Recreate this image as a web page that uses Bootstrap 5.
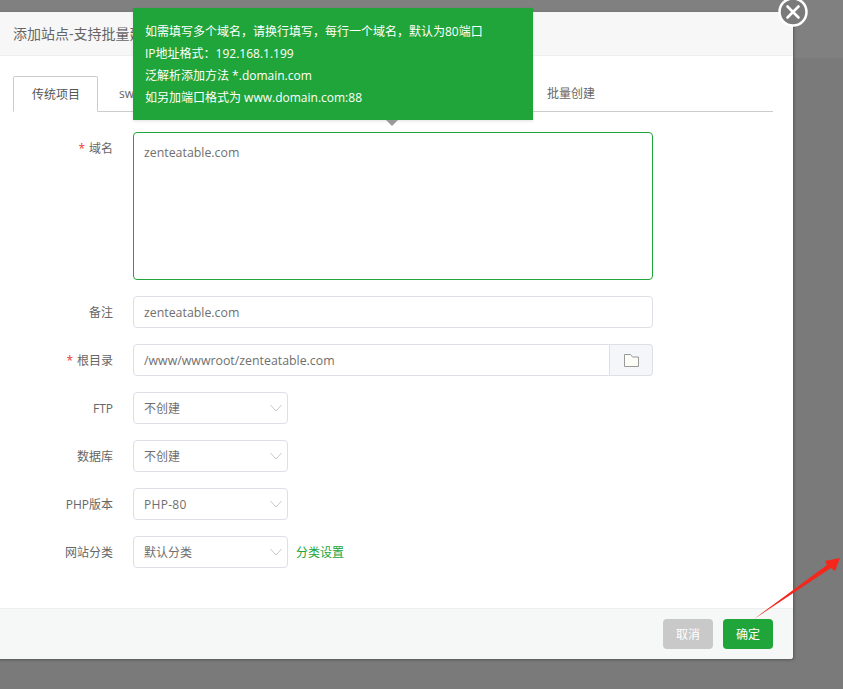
<!DOCTYPE html>
<html lang="zh">
<head>
<meta charset="utf-8">
<title>添加站点</title>
<link href="https://cdn.jsdelivr.net/npm/bootstrap@5.3.0/dist/css/bootstrap.min.css" rel="stylesheet">
<style>
html,body{height:100%;}
body{margin:0;background:#7a7a7a;font-family:"Open Sans","Noto Sans CJK SC",sans-serif;font-size:12px;color:#666;overflow:hidden;position:relative;width:843px;height:689px;}
.top-strip{position:absolute;left:0;top:0;width:843px;height:58px;background:#808080;}
.dialog-box{position:absolute;left:-20px;top:12px;width:813px;height:647px;background:#fff;border-radius:0 0 3px 0;box-shadow:1px 1px 3px rgba(0,0,0,.3);display:flex;flex-direction:column;}
.dialog-head{height:44px;background:#f7f7f7;border-bottom:1px solid #eee;padding:0 0 0 33px;line-height:43px;font-size:14px;color:#666;white-space:nowrap;overflow:hidden;flex:none;}
.dialog-body{flex:1;padding:20px 20px 0 33px;min-height:0;}
.tab-strip{height:36px;width:760px;border-bottom:1px solid #ccc;flex-wrap:nowrap;}
.tab-strip .tab-link{display:block;height:36px;line-height:36px;font-size:12px;color:#666;padding:0;text-align:center;text-decoration:none;}
.tab-on{width:85px;padding-left:1px!important;border:1px solid #ccc;border-bottom-color:#fff;background:#fff;border-radius:2px 2px 0 0;color:#555!important;}
.tab-mid{width:431px;text-align:left!important;padding-left:21px!important;white-space:nowrap;overflow:hidden;}
.tab-last{width:100px;padding-left:18px!important;text-align:left!important;}
.form-area{padding-top:20px;}
.field-row{display:flex;margin-bottom:16px;}
.field-label{width:100px;height:32px;flex:none;text-align:right;line-height:34px;font-size:12px;color:#666;margin:0;}
.req{color:#e33;margin-right:4px;}
.field-main{margin-left:20px;display:flex;align-items:center;}
.text-in{width:520px;height:32px;border:1px solid #dcdfe6;border-radius:4px;padding:0 10px;font-size:12.35px;color:#6f6f6f;line-height:31px;background:#fff;}
.text-area{height:148px;border-color:#20a53a;padding-top:10px;line-height:20px;border-radius:4px;}
.path-in{width:477px;border-radius:4px 0 0 4px;}
.path-btn{width:43px;height:32px;background:#f4f6f9;border:1px solid #dcdfe6;border-left:0;border-radius:0 4px 4px 0;display:flex;align-items:center;justify-content:center;}
.pick{width:155px;height:32px;border:1px solid #dcdfe6;border-radius:4px;padding:1px 5px 0 10px;font-size:12px;line-height:30px;color:#6f6f6f;display:flex;justify-content:space-between;align-items:center;}
.pick svg{margin-top:-1px;}
.wide-txt{letter-spacing:.3px;}
.cat-link{color:#20a53a;margin-left:8px;padding-top:2px;font-size:12px;text-decoration:none;}
.dialog-foot{height:51px;background:#f6f8f8;border-top:1px solid #eee;display:flex;justify-content:flex-end;align-items:center;gap:10px;padding:0 20px 0 0;flex:none;border-radius:0 0 3px 0;}
.foot-btn{width:50px;height:30px;padding:1px 0 0;border:0;border-radius:4px;font-size:12px;color:#fff;line-height:30px;}
.foot-cancel{background:#c9c9c9;}
.foot-ok{background:#20a53a;}
.tip-box{position:absolute;left:133px;top:8px;width:400px;height:112px;background:#20a53a;color:#fff;font-size:12px;line-height:22px;padding:13px 12px 0;box-shadow:0 1px 3px rgba(0,0,0,.12);}
.tip-box p{margin:0;white-space:nowrap;}
.tip-arrow{position:absolute;left:386px;top:120px;width:0;height:0;border-left:6px solid transparent;border-right:6px solid transparent;border-top:6px solid #999;}
.close-x{position:absolute;left:778px;top:-3px;width:30px;height:30px;}
.mark-arrow{position:absolute;left:750px;top:550px;width:93px;height:72px;}
</style>
</head>
<body>
<div class="top-strip"></div>
<div class="dialog-box">
  <div class="dialog-head">添加站点-支持批量建站</div>
  <div class="dialog-body">
    <ul class="nav tab-strip">
      <li class="nav-item"><a class="tab-link tab-on" href="#">传统项目</a></li>
      <li class="nav-item"><a class="tab-link tab-mid" href="#">sw</a></li>
      <li class="nav-item"><a class="tab-link tab-last" href="#">批量创建</a></li>
    </ul>
    <div class="form-area">
      <div class="field-row">
        <label class="field-label"><span class="req">*</span>域名</label>
        <div class="field-main"><div class="text-in text-area">zenteatable.com</div></div>
      </div>
      <div class="field-row">
        <label class="field-label">备注</label>
        <div class="field-main"><div class="text-in">zenteatable.com</div></div>
      </div>
      <div class="field-row">
        <label class="field-label"><span class="req">*</span>根目录</label>
        <div class="field-main"><div class="text-in path-in">/www/wwwroot/zenteatable.com</div>
          <div class="path-btn"><svg width="15" height="13" viewBox="0 0 15 13"><path d="M.5 12.5V.5h6l2 2.5h6v9.5z" fill="#fbfdf6" stroke="#999"/></svg></div>
        </div>
      </div>
      <div class="field-row">
        <label class="field-label">FTP</label>
        <div class="field-main"><div class="pick"><span>不创建</span><svg width="12" height="8" viewBox="0 0 12 8"><path d="M.5 1l5.5 6 5.5-6" fill="none" stroke="#c5c8ce"/></svg></div></div>
      </div>
      <div class="field-row">
        <label class="field-label">数据库</label>
        <div class="field-main"><div class="pick"><span>不创建</span><svg width="12" height="8" viewBox="0 0 12 8"><path d="M.5 1l5.5 6 5.5-6" fill="none" stroke="#c5c8ce"/></svg></div></div>
      </div>
      <div class="field-row">
        <label class="field-label">PHP版本</label>
        <div class="field-main"><div class="pick"><span class="wide-txt">PHP-80</span><svg width="12" height="8" viewBox="0 0 12 8"><path d="M.5 1l5.5 6 5.5-6" fill="none" stroke="#c5c8ce"/></svg></div></div>
      </div>
      <div class="field-row">
        <label class="field-label">网站分类</label>
        <div class="field-main"><div class="pick"><span>默认分类</span><svg width="12" height="8" viewBox="0 0 12 8"><path d="M.5 1l5.5 6 5.5-6" fill="none" stroke="#c5c8ce"/></svg></div><a class="cat-link" href="#">分类设置</a></div>
      </div>
    </div>
  </div>
  <div class="dialog-foot">
    <button type="button" class="btn foot-btn foot-cancel">取消</button>
    <button type="button" class="btn foot-btn foot-ok">确定</button>
  </div>
</div>
<div class="tip-box">
  <p>如需填写多个域名，请换行填写，每行一个域名，默认为80端口</p>
  <p>IP地址格式：192.168.1.199</p>
  <p>泛解析添加方法 *.domain.com</p>
  <p>如另加端口格式为 www.domain.com:88</p>
</div>
<div class="tip-arrow"></div>
<svg class="close-x" viewBox="0 0 30 30"><circle cx="15" cy="15" r="13.5" fill="#7a7a7a" stroke="#fff" stroke-width="2.5"/><path d="M9.5 9.5l11 11M20.5 9.5l-11 11" stroke="#fff" stroke-width="2.6" stroke-linecap="round"/></svg>
<svg class="mark-arrow" viewBox="0 0 93 72"><path d="M4 69 L77 15 L75 11 L90 8 L85 21 L81 18 Z" fill="#f5261c"/></svg>
<script src="https://cdn.jsdelivr.net/npm/bootstrap@5.3.0/dist/js/bootstrap.bundle.min.js"></script>
</body>
</html>
